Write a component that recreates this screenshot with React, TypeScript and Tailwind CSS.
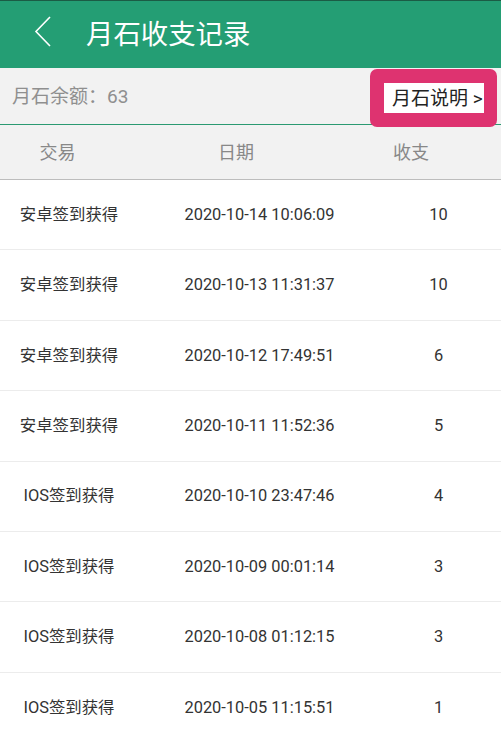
import React from "react";

const rows = [
  ["安卓签到获得", "2020-10-14 10:06:09", "10"],
  ["安卓签到获得", "2020-10-13 11:31:37", "10"],
  ["安卓签到获得", "2020-10-12 17:49:51", "6"],
  ["安卓签到获得", "2020-10-11 11:52:36", "5"],
  ["IOS签到获得", "2020-10-10 23:47:46", "4"],
  ["IOS签到获得", "2020-10-09 00:01:14", "3"],
  ["IOS签到获得", "2020-10-08 01:12:15", "3"],
  ["IOS签到获得", "2020-10-05 11:15:51", "1"],
];

export default function App() {
  return (
    <div
      className="w-[501px] h-[738px] overflow-hidden bg-white"
      style={{ fontFamily: "Roboto, 'Noto Sans CJK SC', sans-serif" }}
    >
      <div className="h-[68px] bg-[#249e74] border-t border-[#1b5c45] flex items-center">
        <svg width="18" height="32" viewBox="0 0 18 32" className="ml-[34px] mt-[-6px]">
          <polyline points="16,1 2,15.5 16,30" fill="none" stroke="#ffffff" strokeWidth="1.6" />
        </svg>
        <span className="ml-[34px] text-[27.4px] text-white leading-none mt-[2px]">月石收支记录</span>
      </div>
      <div className="relative h-[57px] bg-[#f2f2f2] border-b border-[#2b9a72] flex items-center">
        <span className="ml-[12px] text-[19px] text-[#8f8f8f] leading-none">月石余额：63</span>
        <div className="absolute left-[370px] top-[1px] w-[127px] h-[58px] rounded-[7px] bg-[#de3370] flex items-center pl-[14px]">
          <div className="w-[100px] h-[30px] bg-white flex items-center overflow-hidden whitespace-nowrap">
            <span className="ml-[8px] text-[19px] text-[#222] leading-none">月石说明 &gt;</span>
          </div>
        </div>
      </div>
      <div className="h-[55px] bg-[#f2f2f2] border-b border-[#bdbdbd] flex items-center text-[18px] text-[#888]">
        <div className="w-[115px] text-center">交易</div>
        <div className="w-[242px] text-center">日期</div>
        <div className="w-[108px] text-center">收支</div>
      </div>
      {rows.map((r, i) => (
        <div
          key={i}
          className="h-[70.4px] border-b border-[#ececec] flex items-center text-[16.4px] text-[#333]"
        >
          <div className="w-[138px] text-center pt-[1px]">{r[0]}</div>
          <div className="w-[243px] text-center pt-[1px]">{r[1]}</div>
          <div className="w-[115px] text-center pt-[1px]">{r[2]}</div>
        </div>
      ))}
    </div>
  );
}
